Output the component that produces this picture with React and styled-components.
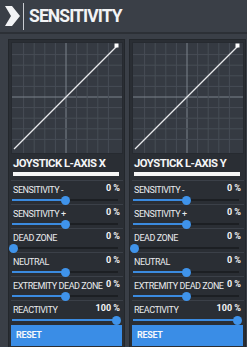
import React from 'react';
import styled, { createGlobalStyle } from 'styled-components';

const Global = createGlobalStyle`
  html, body {
    margin: 0;
    padding: 0;
    background: #3a3f47;
    font-family: Roboto, "Liberation Sans", sans-serif;
    overflow: hidden;
  }
`;

const Page = styled.div`
  width: 247px;
  height: 347px;
  display: flex;
  flex-direction: column;
  background: #3a3f47;
`;

const Header = styled.div`
  height: 34px;
  flex-shrink: 0;
  display: flex;
  align-items: center;
  padding-left: 5px;
  border-bottom: 2px solid #2c3036;
  box-sizing: border-box;
`;

const Divider = styled.div`
  width: 1px;
  height: 27px;
  background: #c9ccd1;
  margin: 0 5px 0 2px;
`;

const HeaderTitle = styled.div`
  color: #f2f3f5;
  font-size: 17.5px;
  font-weight: 700;
  letter-spacing: -0.9px;
  padding-bottom: 1px;
`;

const Panels = styled.div`
  display: flex;
  gap: 4px;
  padding: 5px 0 0 8px;
`;

const Panel = styled.div`
  width: 117px;
  height: 320px;
  flex-shrink: 0;
  box-sizing: border-box;
  border: 1px solid #23272c;
  background: #2a2e34;
  display: flex;
  flex-direction: column;
  padding: 2px 1px 0 2px;
`;

const Graph = styled.div`
  height: 112px;
  flex-shrink: 0;
  background: #353a42;
  border: 1px solid #262a30;
  box-sizing: border-box;
`;

const AxisTitle = styled.div`
  color: #f4f5f7;
  font-size: 11.3px;
  font-weight: 700;
  letter-spacing: -0.5px;
  line-height: 13px;
  padding: 3px 0 0 2px;
  height: 13px;
  flex-shrink: 0;
  white-space: nowrap;
`;

const WhiteBar = styled.div`
  height: 4px;
  flex-shrink: 0;
  background: #f6f6f6;
  margin: 2px 4px 4px 2px;
`;

const Row = styled.div`
  height: 24px;
  flex-shrink: 0;
  box-sizing: border-box;
  border-top: 1px solid #3b4048;
  display: flex;
  flex-direction: column;
  padding: 2px 3px 0 1px;
`;

const RowHead = styled.div`
  display: flex;
  justify-content: space-between;
  align-items: flex-start;
  height: 11px;
`;

const Label = styled.span`
  color: #e9ebee;
  font-size: 9px;
  letter-spacing: -0.45px;
  line-height: 11px;
  padding-top: 2px;
  padding-left: 1px;
  white-space: nowrap;
`;

const Value = styled.span`
  color: #f4f5f7;
  font-size: 9px;
  font-weight: 700;
  line-height: 10px;
  white-space: nowrap;
`;

const Track = styled.div`
  position: relative;
  height: 2px;
  background: #1c1f23;
  margin: 5px 2px 0 0;
`;

const Fill = styled.div`
  height: 100%;
  background: #3b8be0;
`;

const Thumb = styled.div`
  position: absolute;
  top: -3.5px;
  width: 9px;
  height: 9px;
  margin-left: -4.5px;
  border-radius: 50%;
  background: #3f93ea;
`;

const ResetButton = styled.button`
  margin: 1px 1px 0 0;
  height: 21px;
  flex-shrink: 0;
  border: none;
  background: #3a8de6;
  color: #f4f7fb;
  font-family: Roboto, "Liberation Sans", sans-serif;
  font-size: 9px;
  font-weight: 700;
  letter-spacing: -0.3px;
  text-align: left;
  padding: 0 0 2px 5px;
`;

const Chevron = () => (
  <svg width="16" height="20" viewBox="0 0 16 20">
    <polygon points="0,0 7,0 15,10 7,20 0,20 6,10" fill="#f2f3f5" />
  </svg>
);

const CurveGraph = () => {
  const lines = [];
  for (let i = 1; i < 10; i++) {
    const p = i * 10.6 + 1;
    const center = i === 5;
    lines.push(
      <line key={'v' + i} x1={p} y1="0" x2={p} y2="110" stroke={center ? '#7d838c' : '#474d56'} strokeWidth="1" />,
      <line key={'h' + i} x1="0" y1={p} x2="110" y2={p} stroke={center ? '#7d838c' : '#474d56'} strokeWidth="1" />
    );
  }
  return (
    <svg width="110" height="110" viewBox="0 0 110 110">
      {lines}
      <line x1="2" y1="106" x2="105" y2="3" stroke="#e8e9eb" strokeWidth="1.2" />
      <rect x="102.5" y="0.5" width="4" height="4" fill="#ffffff" />
    </svg>
  );
};

const rows = [
  { label: 'SENSITIVITY -', value: 0, pos: 50 },
  { label: 'SENSITIVITY +', value: 0, pos: 50 },
  { label: 'DEAD ZONE', value: 0, pos: 1 },
  { label: 'NEUTRAL', value: 0, pos: 50 },
  { label: 'EXTREMITY DEAD ZONE', value: 0, pos: 50 },
  { label: 'REACTIVITY', value: 100, pos: 99 },
];

const AxisPanel = ({ title }) => (
  <Panel>
    <Graph>
      <CurveGraph />
    </Graph>
    <AxisTitle>{title}</AxisTitle>
    <WhiteBar />
    {rows.map((r) => (
      <Row key={r.label}>
        <RowHead>
          <Label>{r.label}</Label>
          <Value>{r.value} %</Value>
        </RowHead>
        <Track>
          <Fill style={{ width: r.pos + '%' }} />
          <Thumb style={{ left: r.pos + '%' }} />
        </Track>
      </Row>
    ))}
    <ResetButton>RESET</ResetButton>
  </Panel>
);

export default function App() {
  return (
    <Page>
      <Global />
      <Header>
        <Chevron />
        <Divider />
        <HeaderTitle>SENSITIVITY</HeaderTitle>
      </Header>
      <Panels>
        <AxisPanel title="JOYSTICK L-AXIS X" />
        <AxisPanel title="JOYSTICK L-AXIS Y" />
      </Panels>
    </Page>
  );
}
